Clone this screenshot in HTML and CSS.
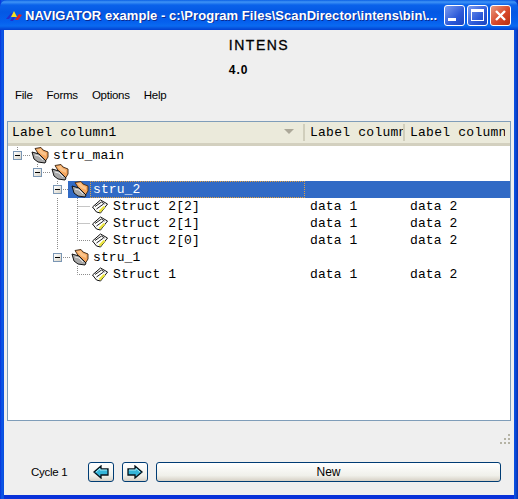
FILE: index.html
```html
<!DOCTYPE html>
<html lang="en">
<head>
    <meta charset="UTF-8">
    <title>NAVIGATOR example</title>
    <link rel="stylesheet" href="styles.css">
</head>
<body>
    <svg class="defs" width="0" height="0">
        <symbol id="folder" viewBox="0 0 18 17">
            <path d="M4 1.500 L10 .5 L12 3 L17 5 L17 10 L14.500 14 L8 8 Z" fill="#f6a75f" stroke="#4a3420" stroke-width="1"/>
            <path d="M6 2.500 L10 2 L11 4 L15 6 L15 9 L10 7 Z" fill="#fbc58c"/>
            <path d="M1 5 L8 7 L15 14 L14 16 L7 15 L3 12 Z" fill="#a9a9a9" stroke="#111" stroke-width="1"/>
            <path d="M4 8 L8 9 L12 13" fill="none" stroke="#e8e8e8" stroke-width="1"/>
        </symbol>
        <symbol id="leaf" viewBox="0 0 17 15">
            <path d="M1 8 L9 1 L16 5 L9 14 L5 13 Z" fill="#fff" stroke="#111" stroke-width="1"/>
            <path d="M3.500 7.500 L10 3 L13 5 M5 10 L12 5" stroke="#222" stroke-width="1" fill="none"/>
            <path d="M7 12 L12 7 L14 8 L9 13.500 Z" fill="#ece53c"/>
        </symbol>
        <symbol id="arrow" viewBox="0 0 16 14">
            <path d="M1 7 L8 1 V4 H15 V10 H8 V13 Z" fill="#35b5d8" stroke="#06121a" stroke-width="1.300"/>
            <path d="M3 7 L7 3.500 V5 H14" fill="none" stroke="#a8ecf8" stroke-width="1"/>
        </symbol>
    </svg>

    <div class="window">
        <div class="titlebar">
            <svg class="app-icon" width="16" height="10" viewBox="0 0 16 10">
                <path d="M0 8 L5 2 L7 2 L3 8 Z" fill="#2030d0"/>
                <path d="M4 10 L8 4 L10 4 L7 10 Z" fill="#2030d0"/>
                <path d="M5 6 L8 0 L11 6 Z" fill="#f4e020"/>
                <path d="M9 9 L13 3 L16 4 L12 9 Z" fill="#e02020"/>
            </svg>
            <span class="title-text">NAVIGATOR example - c:\Program Files\ScanDirector\intens\bin\...</span>
            <div class="win-buttons">
                <div class="win-btn"><span class="glyph-min"></span></div>
                <div class="win-btn"><span class="glyph-max"></span></div>
                <div class="win-btn close">
                    <svg width="13" height="13" viewBox="0 0 13 13"><path d="M2 2 L11 11 M11 2 L2 11" stroke="#fff" stroke-width="2.400"/></svg>
                </div>
            </div>
        </div>

        <div class="client">
            <div class="heading">
                <div class="app-title">INTENS</div>
                <div class="app-version">4.0</div>
            </div>
            <nav class="menu">
                <span>File</span>
                <span>Forms</span>
                <span>Options</span>
                <span>Help</span>
            </nav>

            <div class="tree-table">
                <div class="thead">
                    <div class="th th-main">Label column1<span class="sort-arrow"></span></div>
                    <div class="th th-data">Label column</div>
                    <div class="th th-data">Label column</div>
                </div>
                <div class="tbody">
                    <svg class="guides" width="300" height="150">
                        <path d="M9.500 1 V6 M15 9.500 H22 M29.500 18 V23 M35 26.500 H42 M49.500 35 V40 M49.500 52 V103 M55 43.500 H62 M55 111.500 H62 M69.500 52 V94.500 H82 M69.500 60.500 H82 M69.500 77.500 H82 M69.500 120 V128.500 H82" stroke="#8c8c8c" stroke-dasharray="1 1" fill="none"/>
                    </svg>

                    <div class="row">
                        <span class="expander"></span>
                        <div class="row-main level-0">
                            <svg class="icon"><use href="#folder"/></svg>
                            <span class="label">stru_main</span>
                        </div>
                    </div>
                    <div class="row">
                        <span class="indent"></span><span class="expander"></span>
                        <div class="row-main level-1">
                            <svg class="icon"><use href="#folder"/></svg>
                            <span class="label"></span>
                        </div>
                    </div>
                    <div class="row">
                        <span class="indent"></span><span class="indent"></span><span class="expander"></span>
                        <div class="row-main level-2 selected">
                            <svg class="icon"><use href="#folder"/></svg>
                            <span class="label">stru_2</span>
                            <span class="cell"></span>
                            <span class="cell"></span>
                        </div>
                    </div>
                    <div class="row">
                        <span class="indent"></span><span class="indent"></span><span class="indent"></span><span class="indent"></span>
                        <div class="row-main level-3">
                            <svg class="icon icon-leaf"><use href="#leaf"/></svg>
                            <span class="label">Struct 2[2]</span>
                            <span class="cell">data 1</span>
                            <span class="cell">data 2</span>
                        </div>
                    </div>
                    <div class="row">
                        <span class="indent"></span><span class="indent"></span><span class="indent"></span><span class="indent"></span>
                        <div class="row-main level-3">
                            <svg class="icon icon-leaf"><use href="#leaf"/></svg>
                            <span class="label">Struct 2[1]</span>
                            <span class="cell">data 1</span>
                            <span class="cell">data 2</span>
                        </div>
                    </div>
                    <div class="row">
                        <span class="indent"></span><span class="indent"></span><span class="indent"></span><span class="indent"></span>
                        <div class="row-main level-3">
                            <svg class="icon icon-leaf"><use href="#leaf"/></svg>
                            <span class="label">Struct 2[0]</span>
                            <span class="cell">data 1</span>
                            <span class="cell">data 2</span>
                        </div>
                    </div>
                    <div class="row">
                        <span class="indent"></span><span class="indent"></span><span class="expander"></span>
                        <div class="row-main level-2">
                            <svg class="icon"><use href="#folder"/></svg>
                            <span class="label">stru_1</span>
                        </div>
                    </div>
                    <div class="row">
                        <span class="indent"></span><span class="indent"></span><span class="indent"></span><span class="indent"></span>
                        <div class="row-main level-3">
                            <svg class="icon icon-leaf"><use href="#leaf"/></svg>
                            <span class="label">Struct 1</span>
                            <span class="cell">data 1</span>
                            <span class="cell">data 2</span>
                        </div>
                    </div>
                </div>
            </div>

            <div class="grip-row">
                <svg width="11" height="11" viewBox="0 0 11 11">
                    <path d="M8 0h2v2H8z M4 4h2v2H4z M8 4h2v2H8z M0 8h2v2H0z M4 8h2v2H4z M8 8h2v2H8z" fill="#b5b3a5"/>
                </svg>
            </div>

            <div class="footer">
                <span class="cycle">Cycle 1</span>
                <button class="btn btn-arrow"><svg width="16" height="14"><use href="#arrow"/></svg></button>
                <button class="btn btn-arrow"><svg class="flip" width="16" height="14"><use href="#arrow"/></svg></button>
                <button class="btn btn-new">New</button>
            </div>
        </div>
    </div>
</body>
</html>
```

FILE: styles.css
```css
html, body {
    margin: 0;
    padding: 0;
}
.defs {
    position: absolute;
}
.window {
    width: 518px;
    height: 499px;
    display: flex;
    flex-direction: column;
    background: linear-gradient(to right, #0831d9 0, #0a5be8 2px, #0a4fe0 3px, #0a4fe0 515px, #0831b0 518px);
    overflow: hidden;
}
.titlebar {
    height: 30px;
    flex: none;
    display: flex;
    align-items: center;
    padding: 0 7px 0 6px;
    box-sizing: border-box;
    background: linear-gradient(to bottom, #0a5fe4 0, #3f94f6 2px, #0a62ea 5px, #0458e4 12px, #0560ee 22px, #0a6af0 26px, #0240d0 30px);
    border-radius: 7px 7px 0 0;
}
.app-icon {
    flex: none;
    margin: 2px 3px 0 0;
}
.title-text {
    flex: 1;
    font-family: "Liberation Sans", Arial, sans-serif;
    font-weight: bold;
    font-size: 13px;
    letter-spacing: .05px;
    color: #fff;
    white-space: nowrap;
    overflow: hidden;
    text-shadow: 1px 1px 0 #0a2a90;
}
.win-buttons {
    display: flex;
    gap: 2px;
    flex: none;
}
.win-btn {
    width: 21px;
    height: 21px;
    box-sizing: border-box;
    border: 1px solid #fff;
    border-radius: 3px;
    background: linear-gradient(135deg, #7a9cf0, #2c59d8 60%, #1c44c0);
    display: flex;
    align-items: center;
    justify-content: center;
}
.win-btn.close {
    background: linear-gradient(135deg, #e89a80, #d8482a 55%, #b83010);
}
.glyph-min {
    width: 8px;
    height: 3px;
    background: #fff;
    margin: 9px 5px 0 0;
}
.glyph-max {
    width: 13px;
    height: 12px;
    box-sizing: border-box;
    border: 1px solid #fff;
    border-top-width: 3px;
}
.client {
    flex: 1;
    margin: 0 4px 4px 4px;
    background: #efefef;
    padding: 0 3px;
    display: flex;
    flex-direction: column;
    font-family: "Liberation Sans", Arial, sans-serif;
    font-size: 12px;
    color: #000;
    box-shadow: 0 4px 0 #0831d9;
}
.heading {
    align-self: center;
    margin-top: 7px;
}
.app-title {
    font-size: 14px;
    letter-spacing: 1.500px;
    line-height: 17px;
    -webkit-text-stroke: .3px #000;
}
.app-version {
    font-weight: bold;
    letter-spacing: 1px;
    line-height: 14px;
    margin-top: 9px;
}
.menu {
    display: flex;
    gap: 14px;
    height: 14px;
    line-height: 14px;
    margin: 11px 0 0 8px;
    font-size: 11.500px;
    letter-spacing: -.25px;
}
.tree-table {
    height: 300px;
    margin-top: 19px;
    flex: none;
    box-sizing: border-box;
    border: 1px solid #7f9db9;
    background: #fff;
    font-family: "Liberation Mono", "Courier New", monospace;
    font-size: 13px;
    letter-spacing: .1px;
}
.thead {
    display: flex;
    height: 24px;
    box-sizing: border-box;
    background: #ebeadb;
    border-bottom: 3px solid #d3d0bf;
    letter-spacing: .25px;
}
.th {
    position: relative;
    padding-left: 4px;
    box-sizing: border-box;
    white-space: nowrap;
    overflow: hidden;
    border-right: 2px solid #d0cebc;
    height: 17px;
    margin-top: 2px;
    line-height: 17px;
    flex: none;
}
.th-main {
    width: 297px;
}
.th-data {
    width: 100px;
    padding-left: 5px;
}
.th-data:last-child {
    border-right: none;
}
.sort-arrow {
    position: absolute;
    right: 9px;
    top: 5px;
    width: 0;
    height: 0;
    border-left: 5px solid transparent;
    border-right: 5px solid transparent;
    border-top: 5px solid #aca899;
}
.tbody {
    position: relative;
    padding-top: 1px;
}
.guides {
    position: absolute;
    left: 0;
    top: 0;
}
.row {
    display: flex;
    height: 17px;
    line-height: 17px;
    position: relative;
}
.indent {
    width: 20px;
    flex: none;
}
.expander {
    width: 9px;
    height: 9px;
    box-sizing: border-box;
    margin: 4px 6px 0 5px;
    flex: none;
    border: 1px solid #7a96b4;
    background: linear-gradient(135deg, #fff, #d8d4c8);
    position: relative;
}
.expander::after {
    content: "";
    position: absolute;
    left: 1px;
    top: 3px;
    width: 5px;
    height: 1px;
    background: #000;
}
.row-main {
    flex: 1;
    display: flex;
    min-width: 0;
}
.row-main .icon {
    width: 18px;
    height: 17px;
    margin-left: 3px;
    flex: none;
}
.row-main .icon-leaf {
    height: 15px;
    margin-top: 1px;
}
.label {
    flex: none;
    box-sizing: border-box;
    padding-left: 3px;
    margin-left: 1px;
    white-space: pre;
}
.level-0 .label {
    width: 255px;
}
.level-1 .label {
    width: 235px;
}
.level-2 .label {
    width: 215px;
}
.level-3 .label {
    width: 195px;
}
.cell {
    width: 100px;
    flex: none;
    padding-left: 5px;
    box-sizing: border-box;
}
.selected {
    background: #316ac5;
    color: #fff;
}
.selected .label {
    outline: 1px dotted #e0a040;
    outline-offset: -1px;
}
.grip-row {
    display: flex;
    justify-content: flex-end;
    height: 11px;
    margin-top: 13px;
}
.footer {
    display: flex;
    align-items: center;
    height: 20px;
    margin-top: 17px;
}
.cycle {
    width: 57px;
    margin-left: 24px;
    flex: none;
    font-size: 11.500px;
    letter-spacing: -.3px;
}
.btn {
    height: 20px;
    box-sizing: border-box;
    border: 1px solid #003c74;
    border-radius: 3px;
    background: linear-gradient(to bottom, #fff, #f0f0ea 70%, #d6d0c5);
    font-family: "Liberation Sans", Arial, sans-serif;
    font-size: 12px;
    padding: 0;
    display: flex;
    align-items: center;
    justify-content: center;
    color: #000;
}
.btn-arrow {
    width: 26px;
    margin-right: 8px;
}
.btn-new {
    width: 345px;
}
.flip {
    transform: scaleX(-1);
}
```
